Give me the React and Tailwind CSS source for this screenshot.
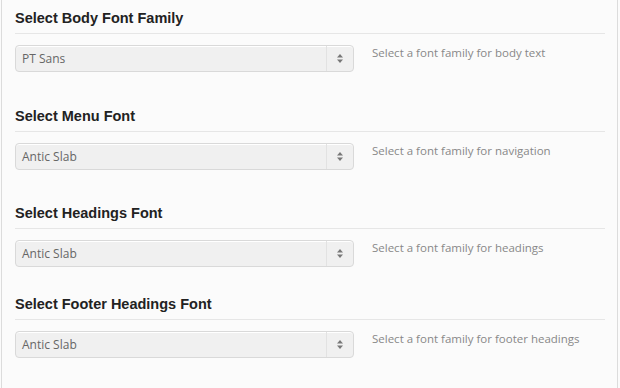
import React from 'react';

const fields = [
  { title: 'Select Body Font Family', value: 'PT Sans', help: 'Select a font family for body text', space: 'mb-[34px]' },
  { title: 'Select Menu Font', value: 'Antic Slab', help: 'Select a font family for navigation', space: 'mb-[33px]' },
  { title: 'Select Headings Font', value: 'Antic Slab', help: 'Select a font family for headings', space: 'mb-[27px]' },
  { title: 'Select Footer Headings Font', value: 'Antic Slab', help: 'Select a font family for footer headings', space: 'mb-0' },
];

function SelectArrows() {
  return (
    <svg width="8" height="11" viewBox="0 0 8 11" className="text-[#777]">
      <path d="M4 1 L7 4.5 H1 Z" fill="currentColor" />
      <path d="M4 10 L7 6.5 H1 Z" fill="currentColor" />
    </svg>
  );
}

function FontField({ field }) {
  return (
    <div className={field.space}>
      <h3 className="text-[14.5px] leading-[20px] font-bold text-[#222] pb-[5px] border-b border-[#e6e6e6] mr-[12px]">
        {field.title}
      </h3>
      <div className="flex items-start mt-[11px]">
        <div className="flex w-[339px] h-[27px] bg-[#f0f0f0] border border-[#d9d9d9] rounded-[4px] shadow-[inset_0_1px_0_#fff]">
          <div className="flex-1 flex items-center pl-[6px] text-[12px] text-[#666] font-['Open_Sans',sans-serif]">{field.value}</div>
          <div className="w-[27px] flex items-center justify-center border-l border-[#e2e2e2]">
            <SelectArrows />
          </div>
        </div>
        <p className="ml-[18px] mt-[1px] text-[11.5px] leading-[14px] text-[#888] font-['Open_Sans',sans-serif]">{field.help}</p>
      </div>
    </div>
  );
}

export default function App() {
  return (
    <div className="w-[620px] h-[388px] bg-[#fbfbfb] overflow-hidden" style={{ fontFamily: '"Liberation Sans", Arial, sans-serif' }}>
      <div className="h-full ml-[1px] mr-[2px] border-l border-r border-[#dcdcdc] pl-[13px] pt-[8px]">
        {fields.map((f) => (
          <FontField key={f.title} field={f} />
        ))}
      </div>
    </div>
  );
}
